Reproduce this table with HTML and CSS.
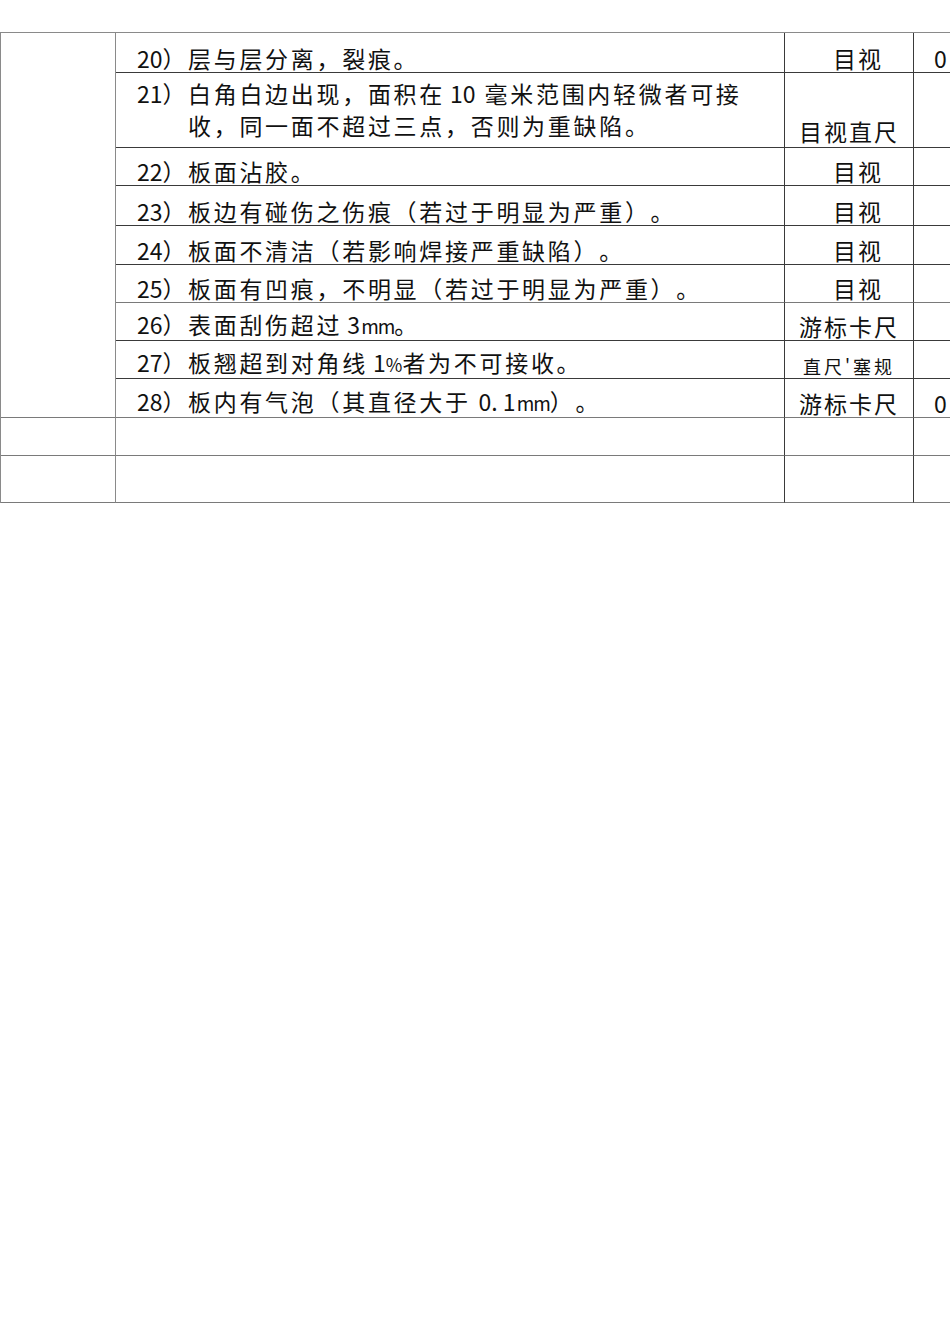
FILE: index.html
```html
<!DOCTYPE html>
<html lang="zh-CN">
<head>
<meta charset="utf-8">
<title>检验标准</title>
<link rel="stylesheet" href="styles.css">
</head>
<body>
<div class="sheet">
  <div class="cell side span9"></div>

  <div class="cell desc"><div class="item"><span class="num">20）</span><span class="txt">层与层分离，裂痕。</span></div></div>
  <div class="cell method shift">目视</div>
  <div class="cell val">0</div>

  <div class="cell desc multi"><div class="item"><span class="num">21）</span><span class="txt"><span class="l1">白角白边出现，面积在<span class="lat gap">10</span>毫米范围内轻微者可接</span><span class="l2">收，同一面不超过三点，否则为重缺陷。</span></span></div></div>
  <div class="cell method lift">目视直尺</div>
  <div class="cell val"></div>

  <div class="cell desc"><div class="item"><span class="num">22）</span><span class="txt">板面沾胶。</span></div></div>
  <div class="cell method shift">目视</div>
  <div class="cell val"></div>

  <div class="cell desc"><div class="item"><span class="num">23）</span><span class="txt">板边有碰伤之伤痕（若过于明显为严重）。</span></div></div>
  <div class="cell method shift">目视</div>
  <div class="cell val"></div>

  <div class="cell desc"><div class="item"><span class="num">24）</span><span class="txt">板面不清洁（若影响焊接严重缺陷）。</span></div></div>
  <div class="cell method shift">目视</div>
  <div class="cell val"></div>

  <div class="cell desc soft"><div class="item"><span class="num">25）</span><span class="txt">板面有凹痕，不明显（若过于明显为严重）。</span></div></div>
  <div class="cell method shift soft">目视</div>
  <div class="cell val soft"></div>

  <div class="cell desc"><div class="item"><span class="num">26）</span><span class="txt">表面刮伤超过<span class="lat"> 3</span><span class="mm">mm</span>。</span></div></div>
  <div class="cell method">游标卡尺</div>
  <div class="cell val"></div>

  <div class="cell desc"><div class="item"><span class="num">27）</span><span class="txt">板翘超到对角线<span class="lat"> 1</span><span class="pct">%</span>者为不可接收。</span></div></div>
  <div class="cell method small">直尺'塞规</div>
  <div class="cell val"></div>

  <div class="cell desc soft"><div class="item"><span class="num">28）</span><span class="txt">板内有气泡（其直径大于 <span class="lat">0. 1</span><span class="mm">mm</span>）。</span></div></div>
  <div class="cell method soft">游标卡尺</div>
  <div class="cell val soft">0</div>

  <div class="cell side"></div>
  <div class="cell desc soft"></div>
  <div class="cell method soft"></div>
  <div class="cell val soft"></div>

  <div class="cell side"></div>
  <div class="cell desc soft"></div>
  <div class="cell method soft"></div>
  <div class="cell val soft"></div>
</div>
</body>
</html>
```

FILE: styles.css
```css
html, body {
  margin: 0;
  padding: 0;
  background: #ffffff;
  overflow: hidden;
}

body {
  font-family: "Noto Sans CJK SC", "Noto Sans", sans-serif;
  color: #111111;
  text-spacing-trim: space-all;
}

.sheet {
  margin-top: 32px;
  display: grid;
  grid-template-columns: 115px 669px 129px 120px;
  grid-template-rows: 40px 75px 38px 40px 39px 38px 38px 38px 39px 38px 47px;
  width: max-content;
  border-top: 1px solid #8a8a8a;
  border-left: 1px solid #8a8a8a;
}

.cell {
  box-sizing: border-box;
  border-right: 1px solid #3a3a3a;
  border-bottom: 1px solid #3a3a3a;
  display: flex;
  align-items: flex-end;
  font-size: 23px;
  line-height: 26px;
  padding-bottom: 1px;
  white-space: nowrap;
}

.cell.soft {
  border-bottom-color: #7a7a7a;
}

.side {
  border-right-color: #8a8a8a;
  border-bottom-color: #7a7a7a;
}

.span9 {
  grid-row: span 9;
}

.desc {
  padding-left: 21px;
  letter-spacing: 2.7px;
}

.desc.multi {
  align-items: center;
  line-height: 32px;
  padding-bottom: 2px;
}

.item {
  display: flex;
  align-items: flex-start;
}

.num {
  width: 51px;
  flex: none;
  letter-spacing: 0;
}

.txt {
  display: block;
}

.lat {
  letter-spacing: 0;
}

.lat.gap {
  margin: 0 9px 0 5px;
}

.mm {
  letter-spacing: -1px;
  font-size: 19px;
  margin-left: 1px;
}

.pct {
  letter-spacing: 0;
  font-size: 18px;
}

.l1 {
  display: block;
  width: 538px;
  text-align: justify;
  text-align-last: justify;
}

.l2 {
  display: block;
}

.method {
  justify-content: center;
  letter-spacing: 2px;
}

.method.shift {
  padding-left: 18px;
}

.method.lift {
  padding-bottom: 3px;
}

.method.small {
  font-size: 18px;
  line-height: 22px;
  letter-spacing: 3px;
  padding-bottom: 1px;
}

.val {
  padding-left: 20px;
}
```
